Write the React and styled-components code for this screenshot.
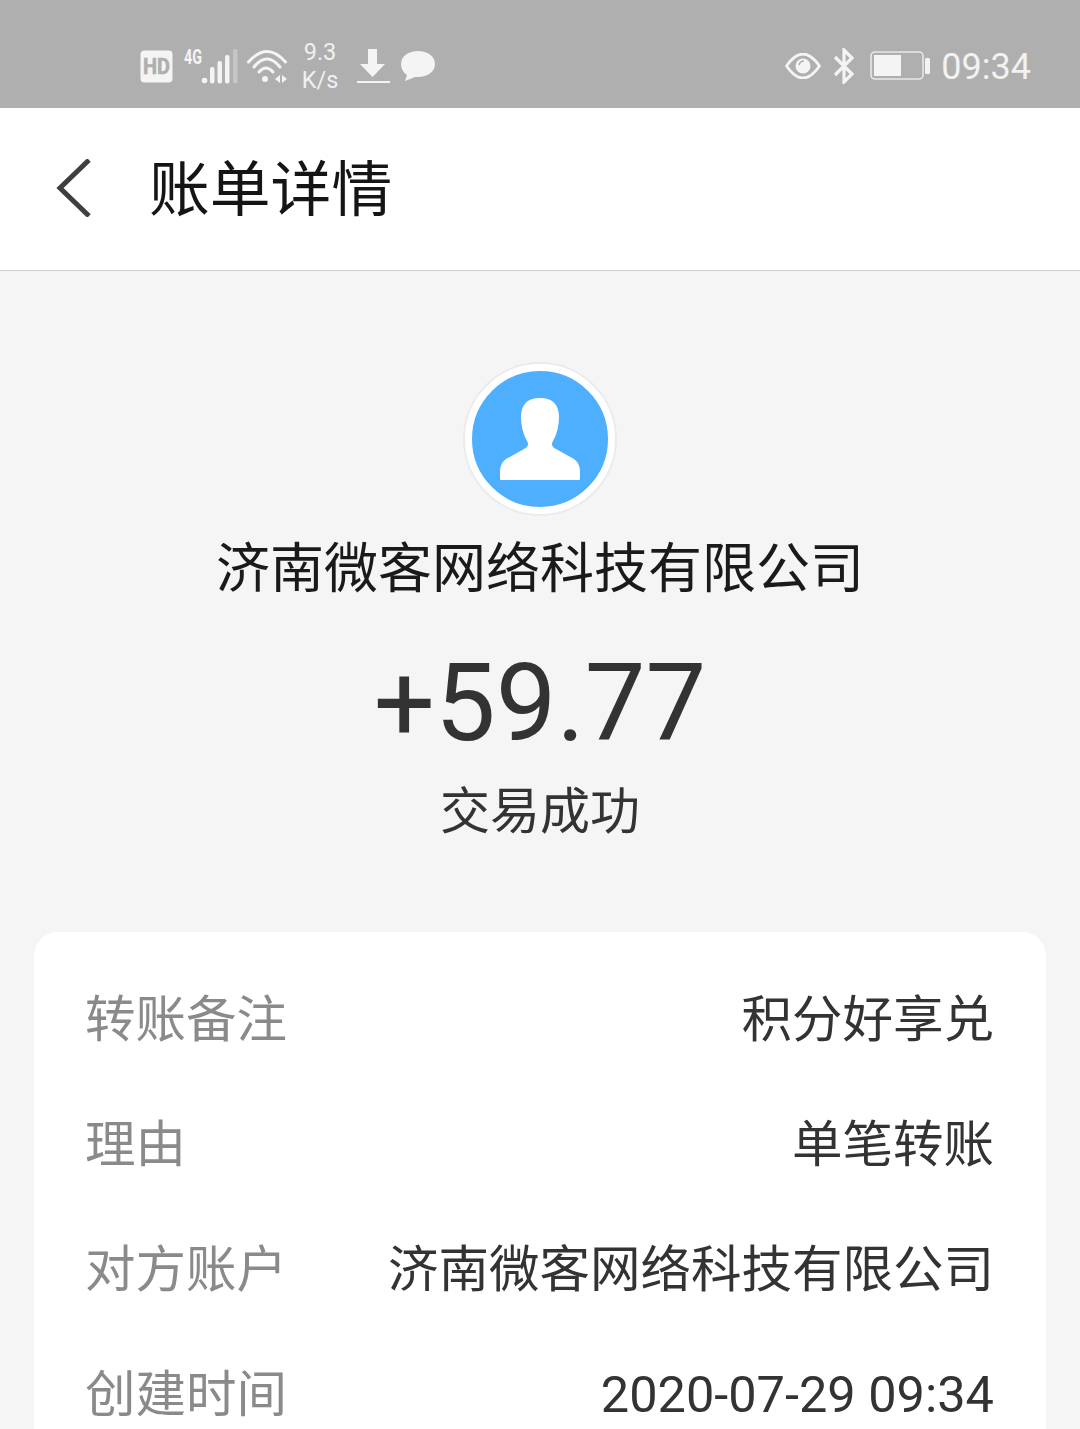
import React from "react";
import styled, { createGlobalStyle } from "styled-components";

const Global = createGlobalStyle`
  html, body { margin: 0; padding: 0; background: #f5f5f5; }
  body { font-family: Roboto, "Noto Sans CJK SC", sans-serif; overflow: hidden; }
`;
const Page = styled.div`
  width: 1080px; height: 1429px; overflow: hidden; display: flex; flex-direction: column;
  background: #f5f5f5;
`;
const StatusBar = styled.div`
  height: 108px; flex: none; background: #afafaf; color: #f4f4f4; display: flex;
  align-items: center; justify-content: space-between; padding: 24px 49px 0 140px; box-sizing: border-box;
`;
const StatusGroup = styled.div`display: flex; align-items: center;`;
const Speed = styled.div`
  width: 38px; margin: 0 18px 0 14px; font-size: 23.5px; line-height: 28px; text-align: center; color: #f0f0f0;
`;
const Clock = styled.div`font-size: 36px; line-height: 40px; color: #f2f2f2; margin: 2px 0 0 11px;`;
const Icon = styled.svg`display: block; flex: none; margin-left: ${p => p.$ml || 0}px;`;
const SignalIcon = styled(Icon)`margin-top: -5px;`;
const IconText = styled.text`
  font-family: Roboto, sans-serif; font-weight: 700;
`;

const Header = styled.header`
  height: 163px; flex: none; box-sizing: border-box; background: #fff; border-bottom: 1px solid #cfcfcf;
  display: flex; align-items: center; padding: 0 0 2px 56px;
`;
const Title = styled.h1`
  margin: -6px 0 0 57px; font-size: 60.8px; font-weight: 400; line-height: 80px; color: #151515;
  font-family: "Noto Sans CJK SC", sans-serif;
`;
const Summary = styled.section`
  display: flex; flex-direction: column; align-items: center; padding-top: 93px;
`;
const Avatar = styled.div`
  width: 136px; height: 136px; border-radius: 50%; background: #4fafff; border: 7px solid #fff;
  box-shadow: 0 0 0 2px #ebebeb; display: flex; align-items: center; justify-content: center;
`;
const Company = styled.div`
  margin-top: 15px; font-size: 54px; line-height: 72px; color: #1a1a1a; white-space: nowrap;
  font-family: "Noto Sans CJK SC", sans-serif;
`;
const Amount = styled.div`
  margin-top: 38px; font-size: 108px; line-height: 128px; color: #333;
`;
const Status = styled.div`
  margin-top: 6px; font-size: 50px; line-height: 68px; color: #333;
  font-family: "Noto Sans CJK SC", sans-serif;
`;
const Card = styled.section`
  margin: 91px 34px 0; background: #fff; border-radius: 24px 24px 0 0; padding: 25px 52px 0 51px; flex: 1;
`;
const Row = styled.div`
  height: 125px; line-height: 125px; display: flex; align-items: baseline; justify-content: space-between;
  font-size: 50.5px; white-space: nowrap; font-family: Roboto, "Noto Sans CJK SC", sans-serif;
`;
const Label = styled.span`color: #8a8a8a;`;
const Value = styled.span`color: #333;`;

const rows = [
  ["转账备注", "积分好享兑"],
  ["理由", "单笔转账"],
  ["对方账户", "济南微客网络科技有限公司"],
  ["创建时间", "2020-07-29 09:34"],
];

export default function App() {
  return (
    <Page>
      <Global />
      <StatusBar>
        <StatusGroup>
          <Icon width="33" height="33" viewBox="0 0 33 33">
            <rect x="0.5" y="0.5" width="32" height="32" rx="4" fill="#f4f4f4" />
            <IconText x="16.5" y="24" textAnchor="middle" fontSize="22" fill="#afafaf" stroke="#afafaf" strokeWidth="0.6" textLength="27" lengthAdjust="spacingAndGlyphs">HD</IconText>
          </Icon>
          <SignalIcon width="54" height="40" viewBox="0 -5 54 40" $ml={11}>
            <IconText x="0" y="15" fontSize="20" fill="#f4f4f4" textLength="18" lengthAdjust="spacingAndGlyphs">4G</IconText>
            <circle cx="20.5" cy="31.5" r="2.8" fill="#f4f4f4" />
            <rect x="26" y="18" width="4.5" height="16.5" rx="2" fill="#f4f4f4" />
            <rect x="33.5" y="12" width="4.5" height="22.5" rx="2" fill="#f4f4f4" />
            <rect x="41" y="6" width="4.5" height="28.5" rx="2" fill="#f4f4f4" />
            <rect x="49" y="0" width="4.5" height="34.5" rx="2" fill="#c6c6c6" />
          </SignalIcon>
          <Icon width="40" height="36" viewBox="0 0 40 36" $ml={9}>
            <path d="M1.500 14Q20-7 38.500 14M7 19Q20 3 33 19M12 24Q19 16 26 24" fill="none" stroke="#f4f4f4" strokeWidth="3" strokeLinecap="round" />
            <circle cx="18" cy="31" r="3" fill="#f4f4f4" />
            <path d="M33 27v8l-5-4zM35 27v8l5-4z" fill="#f4f4f4" />
          </Icon>
          <Speed>9.3<br />K/s</Speed>
          <Icon width="33" height="37" viewBox="0 0 33 37">
            <path d="M11 1h9v15h8L15.500 29 3 16h8z" fill="#f4f4f4" />
            <rect x="0" y="33" width="33" height="2" fill="#f4f4f4" />
          </Icon>
          <Icon width="35" height="32" viewBox="0 0 35 32" $ml={10}>
            <path d="M18 1C9 1 1 6 1 14c0 5 3 9 6 11l-2 6 10-4h3c9 0 17-5 17-13S27 1 18 1z" fill="#f4f4f4" />
          </Icon>
        </StatusGroup>
        <StatusGroup>
          <Icon width="36" height="26" viewBox="0 0 36 26">
            <path d="M1.500 13Q18-11 34.500 13 18 37 1.500 13z" fill="none" stroke="#f4f4f4" strokeWidth="2.8" />
            <circle cx="18" cy="13" r="7.500" fill="#f4f4f4" />
            <path d="M14 12q1-4 5-4" fill="none" stroke="#afafaf" strokeWidth="1.6" />
          </Icon>
          <Icon width="22" height="36" viewBox="0 0 22 36" $ml={12}>
            <path d="M2 9 19 26 11 34V2l8 8L2 27" fill="none" stroke="#f4f4f4" strokeWidth="3.200" />
          </Icon>
          <Icon width="60" height="30" viewBox="0 0 60 30" $ml={15}>
            <rect x="1" y="1" width="52" height="27" rx="4" fill="none" stroke="#e8e8e8" strokeWidth="1.6" />
            <rect x="4" y="4" width="27" height="21" fill="#f4f4f4" />
            <rect x="55" y="7" width="5" height="16" rx="1.5" fill="#f4f4f4" />
          </Icon>
          <Clock>09:34</Clock>
        </StatusGroup>
      </StatusBar>
      <Header>
        <Icon width="36" height="58" viewBox="0 0 36 58">
          <path d="M33 1 4 29l29 28" fill="none" stroke="#3f3f3f" strokeWidth="5" />
        </Icon>
        <Title>账单详情</Title>
      </Header>
      <Summary>
        <Avatar>
          <Icon width="80" height="82" viewBox="0 0 80 82">
            <path d="M40 0c13 0 19 7 19 19 0 9-2 17-6 24-2 3-1 6 3 8l18 10c4 3 6 7 6 13v7c0 1-1 1-2 1H2c-1 0-2 0-2-1v-7c0-6 2-10 6-13l18-10c4-2 5-5 3-8-4-7-6-15-6-24C21 7 27 0 40 0z" fill="#fff" />
          </Icon>
        </Avatar>
        <Company>济南微客网络科技有限公司</Company>
        <Amount>+59.77</Amount>
        <Status>交易成功</Status>
      </Summary>
      <Card>
        {rows.map(([l, v]) => (
          <Row key={l}>
            <Label>{l}</Label>
            <Value>{v}</Value>
          </Row>
        ))}
      </Card>
    </Page>
  );
}
